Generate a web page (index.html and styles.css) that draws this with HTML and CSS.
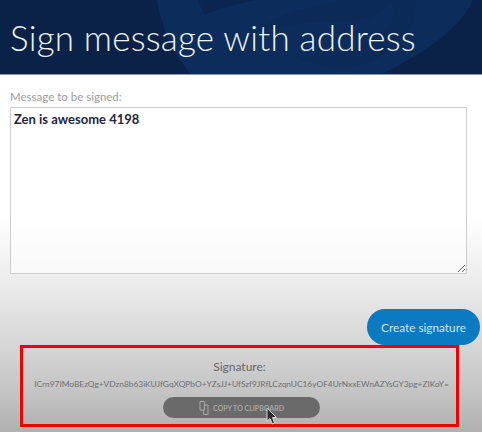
FILE: index.html
```html
<!DOCTYPE html>
<html lang="en">
<head>
<meta charset="utf-8">
<title>Sign message with address</title>
<link rel="stylesheet" href="styles.css">
</head>
<body>
<header class="hero">
  <svg class="hero-art" width="482" height="75" viewBox="0 0 482 75" aria-hidden="true">
    <path d="M157 0 C162 30 175 58 192 75 L380 75 C420 55 460 30 473 0 Z" fill="#0c2d5c"/>
    <path d="M204 15 C220 8 240 3 255 0 L198 0 C200 5 202 10 204 15 Z" fill="#0a2550"/>
    <path d="M255 33 C275 12 320 5 345 0 L392 0 C380 22 350 22 320 22 C295 23 270 28 255 33 Z" fill="#0b2a58"/>
    <path d="M290 55 C330 62 370 50 392 22 C396 14 392 5 392 0 L415 0 C420 30 390 62 345 68 C325 68 305 62 290 55 Z" fill="#0b2a58"/>
  </svg>
  <h1 class="hero-title">Sign message with address</h1>
</header>
<main class="content">
  <label class="field-label" for="msg">Message to be signed:</label>
  <textarea class="message" id="msg">Zen is awesome 4198</textarea>
  <div class="actions">
    <button class="create" type="button">Create signature</button>
  </div>
  <section class="result">
    <div class="result-title">Signature:</div>
    <div class="signature">ICrn97IMoBEzQg+VDzn8b63iKUJfGqXQPbO+YZsJJ+UfSzf9JRfLCzqnUC16yOF4UrNxxEWnAZYsGY3pg+ZIKoY=</div>
    <button class="copy" type="button">
      <svg class="copy-icon" width="10" height="14" viewBox="0 0 10 14" aria-hidden="true">
        <path d="M1 .5h4.500v8.500H1z M5.500 4h3.500v9.500H4.500v-4.500" fill="none" stroke="#a8a8a8" stroke-width="1"/>
      </svg>
      <span>COPY TO CLIPBOARD</span>
      <svg class="cursor" width="12" height="18" viewBox="0 0 12 18" aria-hidden="true">
        <path d="M1 1 L1 14 L4 11.500 L6.500 17 L8.500 16 L6.500 10.500 L10.500 10.500 Z" fill="#2c2c2c" stroke="#d4d4d4" stroke-width="1"/>
      </svg>
    </button>
  </section>
</main>
</body>
</html>
```
FILE: styles.css
```css
html, body {
  margin: 0;
  padding: 0;
}
body {
  width: 482px;
  height: 432px;
  overflow: hidden;
  font-family: Lato, "Open Sans", sans-serif;
  background: #fff;
}
.hero {
  position: relative;
  height: 74px;
  background: #0a2148;
  border-bottom: 1px solid #8f97a8;
  overflow: hidden;
}
.hero-art {
  position: absolute;
  left: 0;
  top: 0;
}
.hero-title {
  position: relative;
  margin: 0;
  padding: 17px 0 0 10px;
  font-size: 35px;
  line-height: 40px;
  font-weight: 300;
  letter-spacing: 0.2px;
  color: #eef1f5;
  white-space: nowrap;
}
.content {
  height: 357px;
  padding: 15px 2px 0 10px;
  box-sizing: border-box;
  display: flex;
  flex-direction: column;
  background: linear-gradient(#fff 0, #fff 40%, #ececec 58%, #d6d6d6 76%, #c2c2c2 90%, #b0b0b0 100%);
}
.field-label {
  font-size: 11.500px;
  line-height: 14px;
  color: #9a9da3;
  margin-bottom: 3px;
}
.message {
  display: block;
  width: 457px;
  height: 167px;
  box-sizing: border-box;
  border: 1px solid #cdcdcd;
  border-radius: 1px;
  padding: 3px;
  margin: 0;
  background: rgba(255, 255, 255, 0.6);
  font-family: Lato, sans-serif;
  font-size: 13px;
  line-height: 16px;
  font-weight: 700;
  color: #23263f;
  outline: none;
}
.actions {
  display: flex;
  justify-content: flex-end;
  padding-top: 35px;
}
.create {
  width: 113px;
  height: 36px;
  border: 0;
  border-radius: 18px;
  background: #0b7ac0;
  color: #cfe4f2;
  font-family: Lato, sans-serif;
  font-size: 11.800px;
  padding: 0;
}
.result {
  width: 439px;
  height: 82px;
  margin-left: 10px;
  box-sizing: border-box;
  border: 3px solid #f00000;
  display: flex;
  flex-direction: column;
  align-items: center;
  padding-top: 11px;
}
.result-title {
  font-size: 12px;
  line-height: 15px;
  color: #66666a;
}
.signature {
  font-size: 8.350px;
  line-height: 11px;
  margin: 5px 0 0 4px;
  color: #6e6f74;
  white-space: nowrap;
}
.copy {
  position: relative;
  display: flex;
  align-items: center;
  justify-content: center;
  gap: 4px;
  width: 157px;
  height: 21px;
  margin: 7px 0 0 4px;
  border: 0;
  border-radius: 11px;
  background: #6a6a6a;
  color: #a6a6a6;
  font-family: Lato, sans-serif;
  font-size: 7px;
  font-weight: 700;
  padding: 0;
}
.cursor {
  position: absolute;
  left: 103px;
  top: 10px;
}
```
